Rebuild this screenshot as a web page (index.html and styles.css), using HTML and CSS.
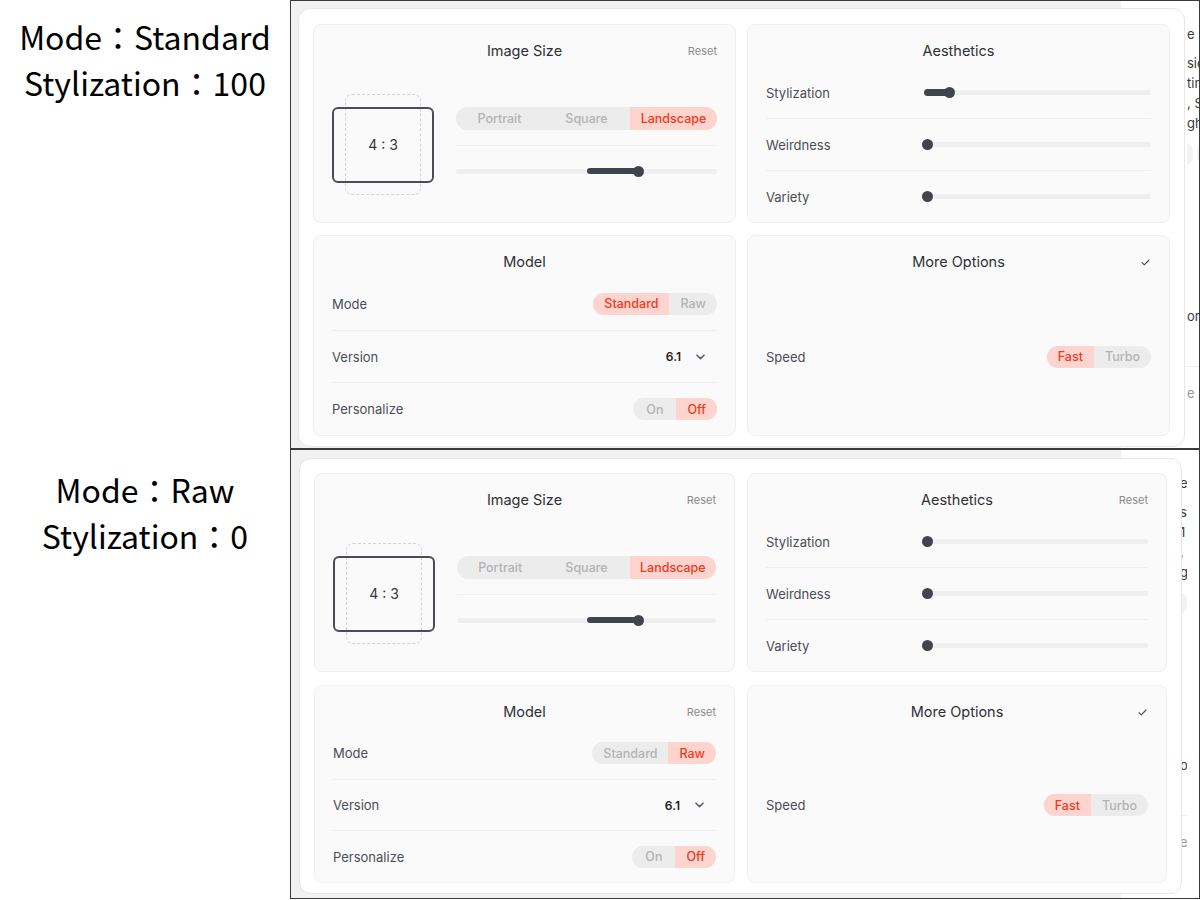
FILE: index.html
```html
<!DOCTYPE html>
<html lang="en">
<head>
<meta charset="utf-8">
<title>Settings comparison</title>
<link rel="stylesheet" href="styles.css">
</head>
<body>
<div class="page">
  <div class="caption">
    <div>Mode：Standard</div>
    <div>Stylization：100</div>
  </div>
  <div class="shot">
    <div class="backdrop">
      <div class="backdrop-main"></div>
      <div class="backdrop-side">
        <div class="side-text">
          <p class="side-line">e</p>
          <p class="side-line gap">sion</p>
          <p class="side-line">time</p>
          <p class="side-line">, So</p>
          <p class="side-line">ghts</p>
          <div class="side-pills"><span class="side-pill"></span><span class="side-pill"></span></div>
          <p class="side-line far">on</p>
          <div class="side-rule"></div>
          <p class="side-line faded">e</p>
        </div>
      </div>
    </div>
    <div class="modal">
      <section class="card">
        <header class="card-head"><span></span><h2 class="card-title">Image Size</h2><span class="reset">Reset</span></header>
        <div class="size-body">
          <div class="ratio-preview">
            <div class="ratio-dash"></div>
            <div class="ratio-box">4 : 3</div>
          </div>
          <div class="size-controls">
            <div class="size-row">
              <div class="seg seg-wide"><span class="seg-item">Portrait</span><span class="seg-item">Square</span><span class="seg-item on">Landscape</span></div>
            </div>
            <div class="size-row divided">
              <div class="slider"><div class="track"></div><div class="fill" style="left:50%;width:20%"></div><div class="thumb" style="left:70%"></div></div>
            </div>
          </div>
        </div>
      </section>
      <section class="card">
        <header class="card-head"><span></span><h2 class="card-title">Aesthetics</h2><span></span></header>
        <div class="rows">
          <div class="row"><span class="label label-fixed">Stylization</span><div class="slider"><div class="track"></div><div class="fill" style="left:0;width:11.2%"></div><div class="thumb" style="left:11.2%"></div></div></div>
          <div class="row"><span class="label label-fixed">Weirdness</span><div class="slider"><div class="track"></div><div class="thumb" style="left:1.6%"></div></div></div>
          <div class="row"><span class="label label-fixed">Variety</span><div class="slider"><div class="track"></div><div class="thumb" style="left:1.6%"></div></div></div>
        </div>
      </section>
      <section class="card">
        <header class="card-head"><span></span><h2 class="card-title">Model</h2><span></span></header>
        <div class="rows">
          <div class="row"><span class="label">Mode</span><div class="seg"><span class="seg-item on">Standard</span><span class="seg-item">Raw</span></div></div>
          <div class="row"><span class="label">Version</span><div class="version"><span>6.1</span><svg class="chevron" width="9" height="6" viewBox="0 0 9 6"><path d="M1 1.2 L4.5 4.6 L8 1.2" fill="none" stroke="#5b5f6b" stroke-width="1.6" stroke-linecap="round" stroke-linejoin="round"/></svg></div></div>
          <div class="row"><span class="label">Personalize</span><div class="seg"><span class="seg-item pad-lg">On</span><span class="seg-item on">Off</span></div></div>
        </div>
      </section>
      <section class="card">
        <header class="card-head"><span></span><h2 class="card-title">More Options</h2><svg class="check" width="9" height="7" viewBox="0 0 9 7"><path d="M1 3.6 L3.3 5.8 L8 1" fill="none" stroke="#4a4c55" stroke-width="1.1" stroke-linecap="round" stroke-linejoin="round"/></svg></header>
        <div class="single-body">
          <div class="row plain"><span class="label">Speed</span><div class="seg"><span class="seg-item on">Fast</span><span class="seg-item">Turbo</span></div></div>
        </div>
      </section>
    </div>
  </div>

  <div class="caption caption-low">
    <div>Mode：Raw</div>
    <div>Stylization：0</div>
  </div>
  <div class="shot shot-low">
    <div class="backdrop">
      <div class="backdrop-main"></div>
      <div class="backdrop-side side-low">
        <div class="side-text">
          <p class="side-line">e</p>
          <p class="side-line gap">sion</p>
          <p class="side-line">1 of</p>
          <p class="side-line">, So</p>
          <p class="side-line">ghts</p>
          <div class="side-pills"><span class="side-pill"></span></div>
          <p class="side-line far">on</p>
          <div class="side-rule"></div>
          <p class="side-line faded">e</p>
        </div>
      </div>
    </div>
    <div class="modal modal-low">
      <section class="card">
        <header class="card-head"><span></span><h2 class="card-title">Image Size</h2><span class="reset">Reset</span></header>
        <div class="size-body">
          <div class="ratio-preview">
            <div class="ratio-dash"></div>
            <div class="ratio-box">4 : 3</div>
          </div>
          <div class="size-controls">
            <div class="size-row">
              <div class="seg seg-wide"><span class="seg-item">Portrait</span><span class="seg-item">Square</span><span class="seg-item on">Landscape</span></div>
            </div>
            <div class="size-row divided">
              <div class="slider"><div class="track"></div><div class="fill" style="left:50%;width:20%"></div><div class="thumb" style="left:70%"></div></div>
            </div>
          </div>
        </div>
      </section>
      <section class="card">
        <header class="card-head"><span></span><h2 class="card-title">Aesthetics</h2><span class="reset">Reset</span></header>
        <div class="rows">
          <div class="row"><span class="label label-fixed">Stylization</span><div class="slider"><div class="track"></div><div class="thumb" style="left:1.6%"></div></div></div>
          <div class="row"><span class="label label-fixed">Weirdness</span><div class="slider"><div class="track"></div><div class="thumb" style="left:1.6%"></div></div></div>
          <div class="row"><span class="label label-fixed">Variety</span><div class="slider"><div class="track"></div><div class="thumb" style="left:1.6%"></div></div></div>
        </div>
      </section>
      <section class="card">
        <header class="card-head"><span></span><h2 class="card-title">Model</h2><span class="reset">Reset</span></header>
        <div class="rows">
          <div class="row"><span class="label">Mode</span><div class="seg"><span class="seg-item">Standard</span><span class="seg-item on">Raw</span></div></div>
          <div class="row"><span class="label">Version</span><div class="version"><span>6.1</span><svg class="chevron" width="9" height="6" viewBox="0 0 9 6"><path d="M1 1.2 L4.5 4.6 L8 1.2" fill="none" stroke="#5b5f6b" stroke-width="1.6" stroke-linecap="round" stroke-linejoin="round"/></svg></div></div>
          <div class="row"><span class="label">Personalize</span><div class="seg"><span class="seg-item pad-lg">On</span><span class="seg-item on">Off</span></div></div>
        </div>
      </section>
      <section class="card">
        <header class="card-head"><span></span><h2 class="card-title">More Options</h2><svg class="check" width="9" height="7" viewBox="0 0 9 7"><path d="M1 3.6 L3.3 5.8 L8 1" fill="none" stroke="#4a4c55" stroke-width="1.1" stroke-linecap="round" stroke-linejoin="round"/></svg></header>
        <div class="single-body">
          <div class="row plain"><span class="label">Speed</span><div class="seg"><span class="seg-item on">Fast</span><span class="seg-item">Turbo</span></div></div>
        </div>
      </section>
    </div>
  </div>
</div>
</body>
</html>
```

FILE: styles.css
```css
* { box-sizing: border-box; margin: 0; padding: 0; }

html, body {
  width: 1200px;
  height: 900px;
  background: #ffffff;
}

body {
  font-family: Inter, "Noto Sans", sans-serif;
  color: #3c3e46;
  overflow: hidden;
}

.page {
  display: grid;
  grid-template-columns: 290px 910px;
  grid-template-rows: 449px 450px;
}

/* captions on the left */
.caption {
  font-family: "Noto Sans CJK JP", "Noto Sans", sans-serif;
  font-size: 32px;
  line-height: 46px;
  color: #000;
  text-align: center;
  padding-top: 13px;
}
.caption-low { padding-top: 17px; }

/* screenshot frames */
.shot {
  position: relative;
  border: 1px solid #3a3a3a;
  overflow: hidden;
}

.backdrop {
  display: flex;
  height: 100%;
}
.backdrop-main {
  flex: 1;
  background: #f1f1f1;
}
.backdrop-side {
  width: 78px;
  background: #fff;
  padding-left: 66px;
}
.side-low { padding-left: 59px; }

.side-text {
  width: 12px;
  overflow: hidden;
  padding-top: 23px;
  font-size: 13px;
  line-height: 20px;
  color: #3a3a3a;
  white-space: nowrap;
}
.side-low .side-text { width: 7px; }
.side-line.gap { margin-top: 9px; }
.side-line.far { margin-top: 141px; }
.side-line.faded { color: #9a9a9a; margin-top: 16px; }
.side-pills {
  display: flex;
  gap: 4px;
  margin-top: 10px;
  margin-left: -40px;
  height: 22px;
}
.side-pill {
  flex: 0 0 46px;
  height: 22px;
  border-radius: 8px;
  background: #f3f3f3;
}
.side-low .side-pill { flex-basis: 47px; }
.side-rule {
  margin-top: 40px;
  border-top: 1px solid #ececec;
}

/* modal */
.modal {
  position: absolute;
  left: 7px;
  top: 7px;
  background: #fff;
  border: 1px solid #e6e6e6;
  border-radius: 12px;
  padding: 15px 14px 10px;
  display: grid;
  grid-template-columns: 423px 423px;
  grid-template-rows: 199px 201px;
  column-gap: 11px;
  row-gap: 12px;
}
.modal-low {
  left: 8px;
  top: 8px;
  padding: 14px 14px 10px;
  grid-template-columns: 421px 420px;
  grid-template-rows: 199px 198px;
  column-gap: 12px;
  row-gap: 13px;
}

/* cards */
.card {
  background: #fafafa;
  border: 1px solid #f0f0f0;
  border-radius: 8px;
  padding: 0 18px;
  display: flex;
  flex-direction: column;
}

.card-head {
  display: grid;
  grid-template-columns: 1fr auto 1fr;
  align-items: center;
  height: 42px;
  padding-top: 16px;
  padding-bottom: 6px;
}
.card-title {
  font-size: 14.5px;
  font-weight: 400;
  line-height: 20px;
  color: #2e3037;
  text-align: center;
}
.reset {
  justify-self: end;
  font-size: 11px;
  color: #8b8b8b;
  line-height: 20px;
}
.check {
  justify-self: end;
  margin-right: 1px;
}

.rows {
  flex: 1;
  display: flex;
  flex-direction: column;
}
.row {
  flex: 1;
  display: flex;
  align-items: center;
  justify-content: space-between;
  border-top: 1px solid #efefef;
}
.row:first-child { border-top: none; }

.single-body {
  flex: 1;
  display: flex;
  flex-direction: column;
  justify-content: center;
}
.row.plain {
  flex: 0 0 52px;
  border-top: none;
}

.label {
  font-size: 13px;
  color: #4b4d56;
}
.label-fixed { flex: 0 0 158px; }

/* image size */
.size-body {
  flex: 1;
  display: flex;
  align-items: center;
}
.ratio-preview {
  position: relative;
  flex: 0 0 102px;
  height: 102px;
}
.ratio-dash {
  position: absolute;
  left: 13px;
  top: 0;
  width: 76px;
  height: 101px;
  border: 1.5px dashed #cfd3db;
  border-radius: 7px;
}
.ratio-box {
  position: absolute;
  left: 0;
  top: 13px;
  width: 102px;
  height: 76px;
  border: 2px solid #4a4d56;
  border-radius: 6px;
  display: flex;
  align-items: center;
  justify-content: center;
  font-size: 14px;
  color: #35373e;
}
.size-controls {
  flex: 1;
  margin-left: 22px;
  display: flex;
  flex-direction: column;
}
.size-row {
  height: 52px;
  display: flex;
  align-items: center;
}
.size-row.divided { border-top: 1px solid #f0f0f0; }

/* segmented controls */
.seg {
  display: flex;
  height: 22px;
  border-radius: 11px;
  background: #ececec;
  overflow: hidden;
}
.seg-wide {
  width: 100%;
  height: 23px;
  border-radius: 12px;
}
.seg-item {
  display: flex;
  align-items: center;
  justify-content: center;
  padding: 0 11px;
  font-size: 12.5px;
  font-weight: 500;
  color: #b3b3b3;
}
.seg-wide .seg-item { flex: 1; padding: 0; }
.seg-item.pad-lg { padding: 0 13px; }
.seg-item.on {
  background: #fdd5ce;
  color: #f5391b;
}

/* version */
.version {
  display: flex;
  align-items: center;
  gap: 15px;
  padding-right: 12px;
  font-size: 12px;
  font-weight: 600;
  color: #222;
}

/* sliders */
.slider {
  position: relative;
  flex: 1;
  height: 11px;
  display: flex;
  align-items: center;
}
.track {
  flex: 1;
  height: 5px;
  border-radius: 3px;
  background: #efeff1;
}
.fill {
  position: absolute;
  top: 2px;
  height: 6.5px;
  border-radius: 4px;
  background: #41444d;
}
.thumb {
  position: absolute;
  top: 0;
  width: 11px;
  height: 11px;
  margin-left: -5.5px;
  border-radius: 50%;
  background: #41444d;
}
```
